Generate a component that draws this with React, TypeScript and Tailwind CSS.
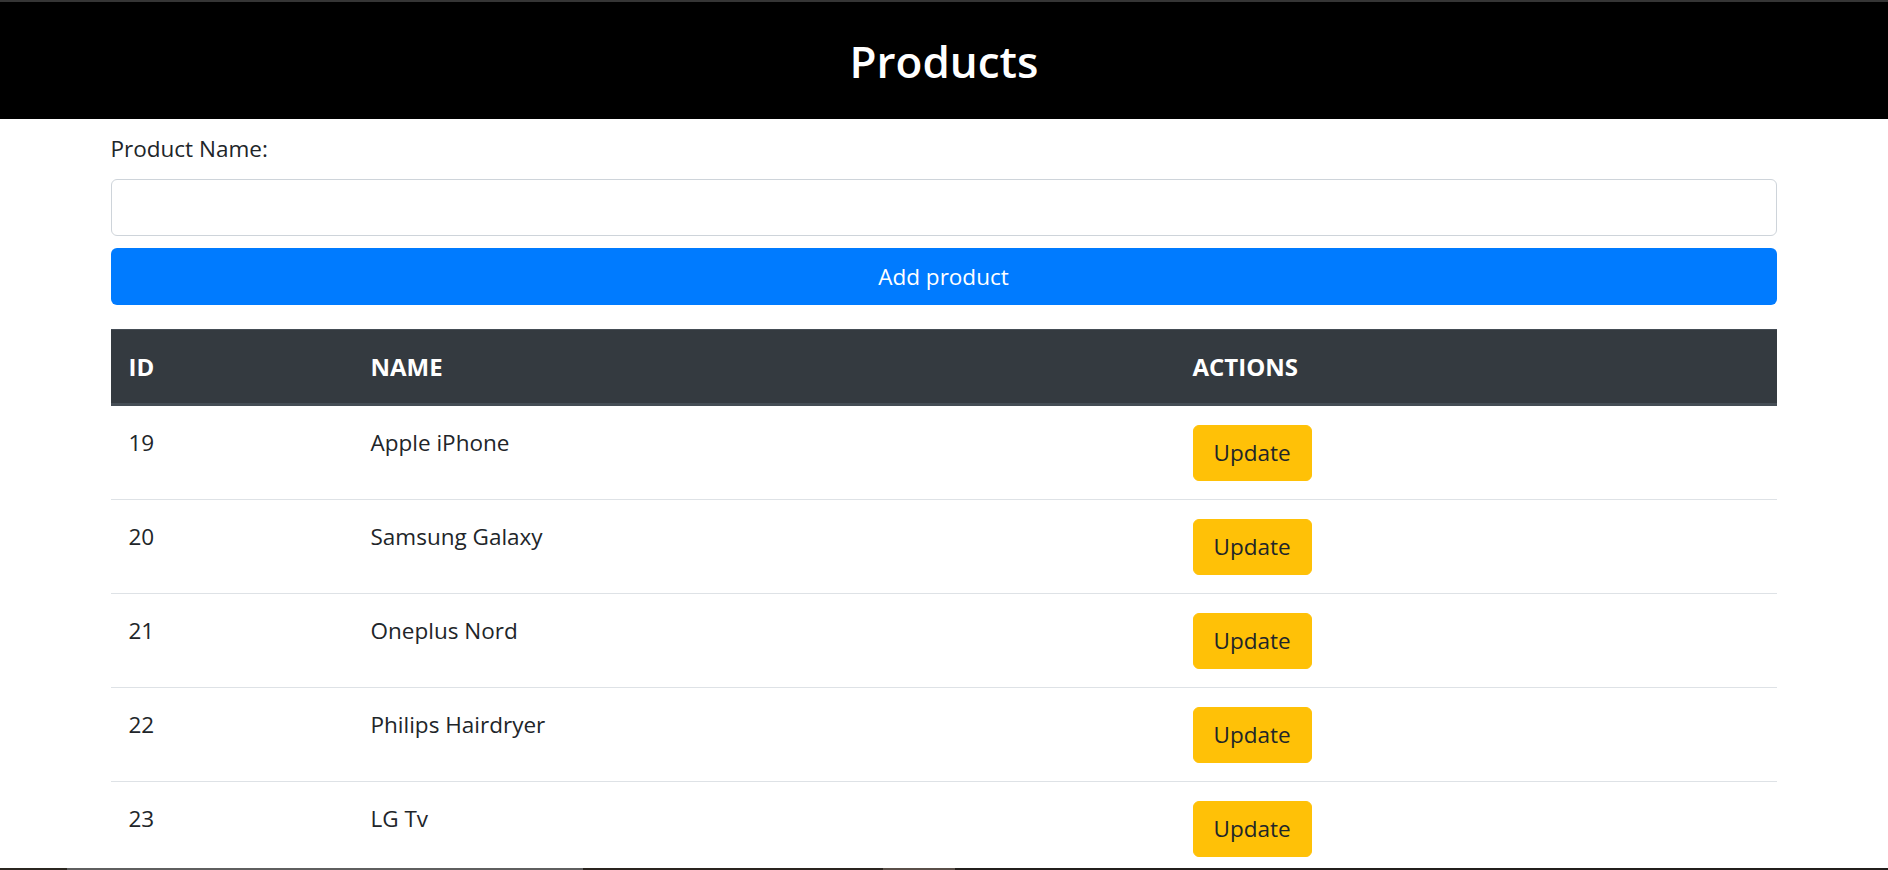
import React from "react";

const products = [
  { id: 19, name: "Apple iPhone" },
  { id: 20, name: "Samsung Galaxy" },
  { id: 21, name: "Oneplus Nord" },
  { id: 22, name: "Philips Hairdryer" },
  { id: 23, name: "LG Tv" },
];

export default function App() {
  return (
    <div className="min-h-screen bg-white text-[#212529] font-['Open_Sans','Noto_Sans',sans-serif] text-[22.5px] leading-[36px]">
      <header className="border-t-2 border-[#353535] bg-black h-[119px] flex items-center justify-center">
        <h1 className="text-[44px] leading-[58px] font-semibold text-white">Products</h1>
      </header>

      <main className="mx-auto w-[1710px] pl-[21.5px] pr-[22.5px]">
        <form className="pt-3" onSubmit={(e) => e.preventDefault()}>
          <label className="block mb-3">Product Name:</label>
          <input
            type="text"
            className="block w-full h-[57px] rounded-[6px] border-[1.5px] border-[#ced4da] bg-white px-[18px] outline-none"
          />
          <button
            type="submit"
            className="mt-3 block w-full h-[57px] rounded-[6px] bg-[#007bff] text-white"
          >
            Add product
          </button>
        </form>

        <table className="mt-6 w-full border-collapse text-left">
          <thead className="bg-[#343a40] text-white text-[24px]">
            <tr>
              <th className="w-[242px] px-[18px] py-[18.5px] font-bold border-t border-t-[#454d55] border-b-[3px] border-b-[#454d55]">
                ID
              </th>
              <th className="w-[822px] px-[18px] py-[18.5px] font-bold border-t border-t-[#454d55] border-b-[3px] border-b-[#454d55]">
                NAME
              </th>
              <th className="px-[18px] py-[18.5px] font-bold border-t border-t-[#454d55] border-b-[3px] border-b-[#454d55]">
                ACTIONS
              </th>
            </tr>
          </thead>
          <tbody>
            {products.map((p) => (
              <tr key={p.id} className="border-t border-[#dee2e6]">
                <td className="px-[18px] pt-[18.5px] pb-[18.5px] align-top">{p.id}</td>
                <td className="px-[18px] pt-[18.5px] pb-[18.5px] align-top">{p.name}</td>
                <td className="px-[18px] pt-[18.5px] pb-[18.5px] align-top">
                  <button className="rounded-[6px] border-[1.5px] border-[#ffc107] bg-[#ffc107] px-[20px] py-[9px] text-[#212529]">
                    Update
                  </button>
                </td>
              </tr>
            ))}
          </tbody>
        </table>
      </main>

      <div className="fixed bottom-0 left-0 right-0 h-[2px] flex">
        <div className="w-[67px] bg-[#2b2620]" />
        <div className="w-[516px] bg-[#5f5f5f]" />
        <div className="w-[300px] bg-[#2a241f]" />
        <div className="w-[72px] bg-[#5a4f48]" />
        <div className="flex-1 bg-[#231f1c]" />
      </div>
    </div>
  );
}
